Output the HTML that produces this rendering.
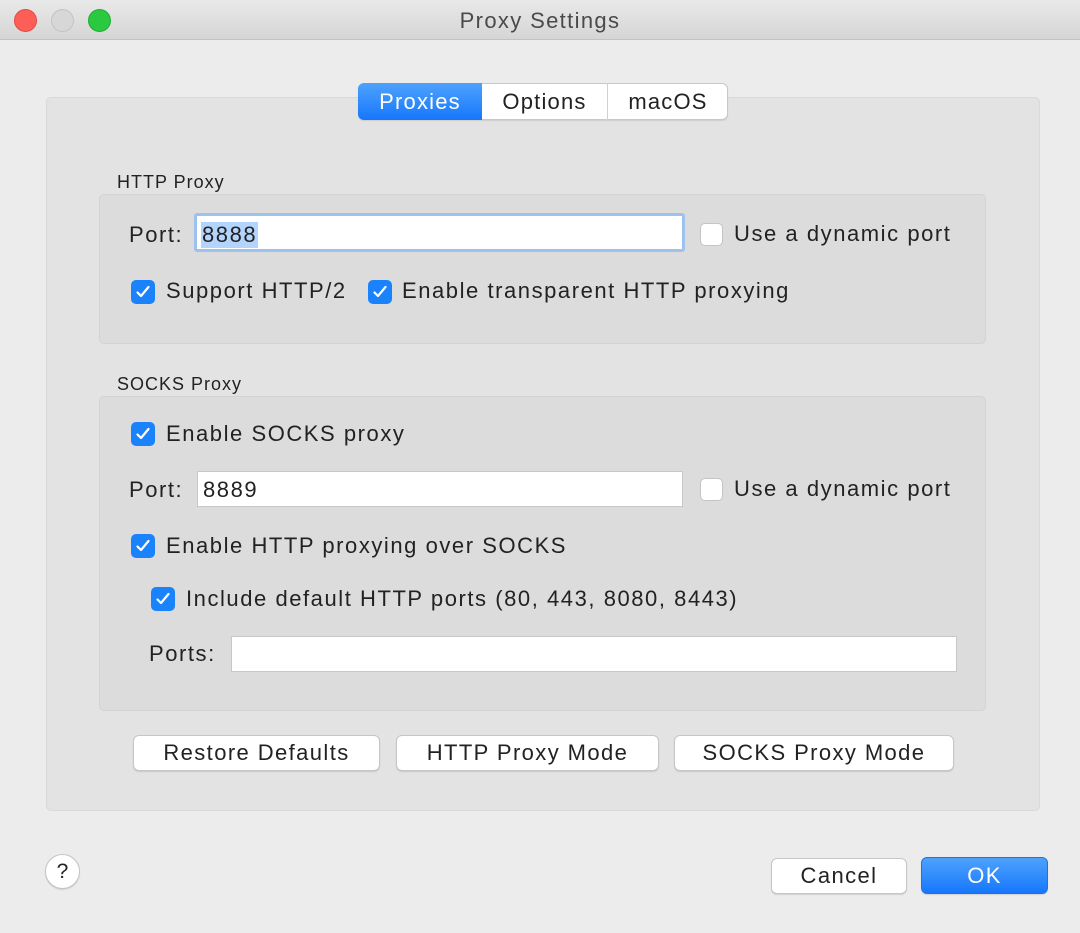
<!DOCTYPE html>
<html><head><meta charset="utf-8"><style>
*{box-sizing:border-box;margin:0;padding:0}
body{width:1080px;height:933px;background:#ececec;font-family:"Liberation Sans",sans-serif;color:#222;position:relative;overflow:hidden}
.a{position:absolute}
.t{font-size:22px;line-height:26px;white-space:nowrap;letter-spacing:1.55px}
.s{font-size:18px;line-height:22px;white-space:nowrap;letter-spacing:1px}
.cb{position:absolute;width:24px;height:24px;border-radius:5px;background:#1a82fb}
.cb svg{position:absolute;left:4px;top:4px}
.ucb{position:absolute;width:23px;height:23px;border-radius:5px;background:#fff;border:1px solid #c4c4c4}
.fld{position:absolute;background:#fff;border:1px solid #c8c8c8}
.btn{position:absolute;background:#fff;border:1px solid #c6c6c6;border-radius:6px;box-shadow:0 1px 1px rgba(0,0,0,.12);font-size:22px;text-align:center;line-height:33px;letter-spacing:1.4px;white-space:nowrap}
</style></head><body>
<div class="a" style="left:0;top:0;width:1080px;height:40px;background:linear-gradient(#e9e9e9,#d5d5d5);border-bottom:1px solid #c2c2c2"></div>
<div class="a" style="left:14px;top:9px;width:23px;height:23px;border-radius:50%;background:#fd5f57;border:1px solid #e24a43"></div>
<div class="a" style="left:51px;top:9px;width:23px;height:23px;border-radius:50%;background:#d7d7d7;border:1px solid #c3c3c3"></div>
<div class="a" style="left:88px;top:9px;width:23px;height:23px;border-radius:50%;background:#2ac940;border:1px solid #1fae32"></div>
<div class="a t" style="left:0;width:1080px;top:8px;text-align:center;color:#4a4a4a;letter-spacing:1.35px">Proxy Settings</div>

<div class="a" style="left:46px;top:97px;width:994px;height:714px;background:#e3e3e3;border:1px solid #d9d9d9;border-radius:5px"></div>
<div class="a" style="left:358px;top:83px;width:370px;height:37px;background:#fff;border:1px solid #c8c8c8;border-radius:6px;box-shadow:0 1px 1px rgba(0,0,0,.1)"></div>
<div class="a t" style="left:358px;top:83px;width:124px;height:37px;background:linear-gradient(#4ea2fd,#1677fb);border-radius:6px 0 0 6px;color:#fff;text-align:center;line-height:37px;letter-spacing:1.2px">Proxies</div>
<div class="a t" style="left:482px;top:83px;width:126px;height:37px;line-height:37px;text-align:center;border-right:1px solid #d0d0d0;letter-spacing:1.2px">Options</div>
<div class="a t" style="left:608px;top:83px;width:120px;height:37px;line-height:37px;text-align:center;letter-spacing:1.2px">macOS</div>

<div class="a s" style="left:117px;top:171px">HTTP Proxy</div>
<div class="a" style="left:99px;top:194px;width:887px;height:150px;background:#dcdcdc;border:1px solid #d3d3d3;border-radius:5px"></div>
<div class="a t" style="left:129px;top:222px">Port:</div>
<div class="fld" style="left:194px;top:213px;width:491px;height:39px;border:3px solid #9ec2ee;border-radius:3px"></div>
<div class="a t" style="left:201px;top:222px;background:#b3d4fc;padding:0 1px">8888</div>
<div class="ucb" style="left:700px;top:223px"></div>
<div class="a t" style="left:734px;top:221px">Use a dynamic port</div>
<div class="cb" style="left:131px;top:280px"><svg width="16" height="16" viewBox="0 0 16 16"><path d="M2.5 8.5l3.5 3.5 7.5-9" fill="none" stroke="#fff" stroke-width="2.2" stroke-linecap="round" stroke-linejoin="round"/></svg></div>
<div class="a t" style="left:166px;top:278px">Support HTTP/2</div>
<div class="cb" style="left:368px;top:280px"><svg width="16" height="16" viewBox="0 0 16 16"><path d="M2.5 8.5l3.5 3.5 7.5-9" fill="none" stroke="#fff" stroke-width="2.2" stroke-linecap="round" stroke-linejoin="round"/></svg></div>
<div class="a t" style="left:402px;top:278px">Enable transparent HTTP proxying</div>

<div class="a s" style="left:117px;top:373px">SOCKS Proxy</div>
<div class="a" style="left:99px;top:396px;width:887px;height:315px;background:#dcdcdc;border:1px solid #d3d3d3;border-radius:5px"></div>
<div class="cb" style="left:131px;top:422px"><svg width="16" height="16" viewBox="0 0 16 16"><path d="M2.5 8.5l3.5 3.5 7.5-9" fill="none" stroke="#fff" stroke-width="2.2" stroke-linecap="round" stroke-linejoin="round"/></svg></div>
<div class="a t" style="left:166px;top:421px">Enable SOCKS proxy</div>
<div class="a t" style="left:129px;top:477px">Port:</div>
<div class="fld" style="left:197px;top:471px;width:486px;height:36px"></div>
<div class="a t" style="left:203px;top:477px">8889</div>
<div class="ucb" style="left:700px;top:478px"></div>
<div class="a t" style="left:734px;top:476px">Use a dynamic port</div>
<div class="cb" style="left:131px;top:534px"><svg width="16" height="16" viewBox="0 0 16 16"><path d="M2.5 8.5l3.5 3.5 7.5-9" fill="none" stroke="#fff" stroke-width="2.2" stroke-linecap="round" stroke-linejoin="round"/></svg></div>
<div class="a t" style="left:166px;top:533px">Enable HTTP proxying over SOCKS</div>
<div class="cb" style="left:151px;top:587px"><svg width="16" height="16" viewBox="0 0 16 16"><path d="M2.5 8.5l3.5 3.5 7.5-9" fill="none" stroke="#fff" stroke-width="2.2" stroke-linecap="round" stroke-linejoin="round"/></svg></div>
<div class="a t" style="left:186px;top:586px">Include default HTTP ports (80, 443, 8080, 8443)</div>
<div class="a t" style="left:149px;top:641px">Ports:</div>
<div class="fld" style="left:231px;top:636px;width:726px;height:36px"></div>

<div class="btn" style="left:133px;top:735px;width:247px;height:36px">Restore Defaults</div>
<div class="btn" style="left:396px;top:735px;width:263px;height:36px">HTTP Proxy Mode</div>
<div class="btn" style="left:674px;top:735px;width:280px;height:36px">SOCKS Proxy Mode</div>

<div class="a" style="left:45px;top:854px;width:35px;height:35px;border-radius:50%;background:#fff;border:1px solid #c4c4c4;box-shadow:0 1px 1px rgba(0,0,0,.12);text-align:center;font-size:21px;line-height:33px">?</div>
<div class="btn" style="left:771px;top:858px;width:136px;height:36px">Cancel</div>
<div class="btn" style="left:921px;top:857px;width:127px;height:37px;background:linear-gradient(#4ea2fd,#1677fb);border-color:#1a74e8;color:#fff;line-height:35px">OK</div>
</body></html>
